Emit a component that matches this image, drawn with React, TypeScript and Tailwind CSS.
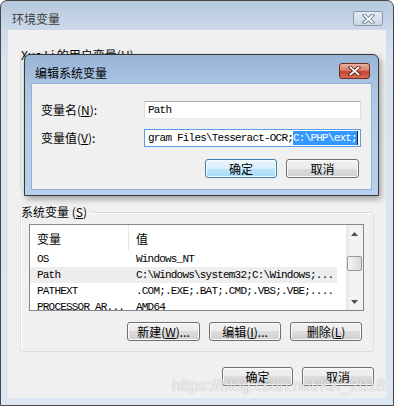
import type { ReactNode } from "react";

/* Win7-style "环境变量" dialog with the "编辑系统变量" child window on top */

const rows = [
  { name: "OS", value: "Windows_NT" },
  { name: "Path", value: "C:\\Windows\\system32;C:\\Windows;...", sel: true },
  { name: "PATHEXT", value: ".COM;.EXE;.BAT;.CMD;.VBS;.VBE;...." },
  { name: "PROCESSOR_AR...", value: "AMD64" },
];

function Btn({ children, className, def }: { children: ReactNode; className: string; def?: boolean }) {
  return (
    <div
      className={
        "h-[19px] rounded-[3px] border flex items-center justify-center text-[12px] leading-none text-black shadow-[inset_0_0_0_1px_#fbfbfb] " +
        (def
          ? "border-[#3c7fb1] bg-[linear-gradient(#eaf6fd_0%,#d9f0fc_50%,#bee6fd_50%,#a7d9f5_100%)] "
          : "border-[#707070] bg-[linear-gradient(#f2f2f2_0%,#ebebeb_50%,#dddddd_50%,#cfcfcf_100%)] ") +
        className
      }
    >
      {children}
    </div>
  );
}

function CloseX({ dark }: { dark: string }) {
  return (
    <svg width="13" height="10" viewBox="0 0 13 10">
      <path d="M2.5 1.5 L10.5 8.5 M10.5 1.5 L2.5 8.5" stroke={dark} strokeWidth="3.6" strokeLinecap="square" />
      <path d="M2.5 1.5 L10.5 8.5 M10.5 1.5 L2.5 8.5" stroke="#ffffff" strokeWidth="1.8" strokeLinecap="square" />
    </svg>
  );
}

function Tri({ up }: { up?: boolean }) {
  return (
    <svg width="7" height="4" viewBox="0 0 7 4">
      <path d={up ? "M0 4 L3.5 0 L7 4 Z" : "M0 0 L7 0 L3.5 4 Z"} fill="#4d4d4d" />
    </svg>
  );
}

export default function App() {
  return (
    <div className="w-[394px] h-[406px] relative overflow-hidden bg-white font-['Noto_Sans_CJK_SC','Liberation_Sans',sans-serif] text-black">
      {/* outer window */}
      <div className="w-full h-full flex flex-col border border-[#474747] rounded-t-[7px] px-[7px] pb-[7px] bg-[linear-gradient(180deg,#b6c8dd_0px,#cbd9ea_28px,#d8e3f0_60px,#dbe6f2_100%)]">
        <div className="h-[29px] flex items-start justify-between pl-[4px] pr-[3px]">
          <span className="pt-[11px] text-[12px] leading-[14px] text-[#3c3c3c]">环境变量</span>
          <div className="mt-[10px] w-[30px] h-[15px] rounded-[3px] border border-[#8797ad] bg-[linear-gradient(#e3ebf4,#cad7e7)] flex items-center justify-center">
            <CloseX dark="#6c7c92" />
          </div>
        </div>

        <div className="flex-1 bg-[#f0f0f0] px-[12px] flex flex-col">
          <fieldset className="mt-[18px] h-[142px] border border-[#d5dfe5] rounded-[3px]">
            <legend className="text-[12px] leading-[14px] pr-[3px]">Xue Li 的用户变量(<u>U</u>)</legend>
          </fieldset>

          <fieldset className="mt-[15px] border border-[#d5dfe5] rounded-[3px] shadow-[inset_1px_1px_0_#ffffff]">
            <legend className="text-[12px] leading-[14px] pr-[3px]">
              系统变量 (<u>S</u>)
            </legend>
            <div className="pt-[5px] pl-[8px] pr-[9px] pb-[10px]">
              <div className="h-[87px] border border-[#828790] bg-white flex overflow-hidden">
                <div className="flex-1 flex flex-col">
                  <div className="h-[26px] flex text-[12px] leading-none shrink-0">
                    <div className="w-[99px] pl-[7px] pt-[2px] flex items-center border-r border-[#e5e5e5]">变量</div>
                    <div className="flex-1 pl-[7px] pt-[2px] flex items-center">值</div>
                  </div>
                  {rows.map((r) => (
                    <div
                      key={r.name}
                      className={
                        "h-[16px] shrink-0 flex items-center w-[307px] font-['Liberation_Mono',monospace] text-[11px] tracking-[-0.8px] leading-none " +
                        (r.sel ? "bg-[#eeeeee]" : "")
                      }
                    >
                      <div className="w-[99px] pl-[7px] whitespace-nowrap overflow-hidden">{r.name}</div>
                      <div className="flex-1 pl-[7px] whitespace-nowrap overflow-hidden">{r.value}</div>
                    </div>
                  ))}
                </div>
                <div className="w-[17px] flex flex-col bg-[linear-gradient(90deg,#e6e6e6,#f4f4f4_30%,#f0f0f0)]">
                  <div className="h-[17px] flex items-center justify-center">
                    <Tri up />
                  </div>
                  <div className="mt-[14px] ml-[1px] w-[15px] h-[15px] rounded-[2px] border border-[#979797] bg-[linear-gradient(90deg,#f5f5f5,#e6e6e6_50%,#d9d9d9)]" />
                  <div className="flex-1" />
                  <div className="h-[17px] flex items-center justify-center">
                    <Tri />
                  </div>
                </div>
              </div>
              <div className="mt-[11px] pr-[2px] flex justify-end gap-[9px]">
                <Btn className="w-[73px]">新建(<u>W</u>)...</Btn>
                <Btn className="w-[72px]">编辑(<u>I</u>)...</Btn>
                <Btn className="w-[72px]">删除(<u>L</u>)</Btn>
              </div>
            </div>
          </fieldset>

          <div className="mt-[15px] flex justify-end gap-[9px]">
            <Btn className="w-[71px]">确定</Btn>
            <Btn className="w-[72px]">取消</Btn>
          </div>
        </div>
      </div>

      {/* child dialog */}
      <div className="absolute left-[24px] top-[54px] w-[355px] h-[142px] border border-[#363636] rounded-t-[6px] px-[6px] pb-[5px] flex flex-col bg-[linear-gradient(180deg,#98b4d5_0px,#a8c3e1_26px,#b3cce8_60px,#b8d1ec_100%)] shadow-[2px_3px_6px_rgba(0,0,0,0.35)]">
        <div className="h-[28px] flex items-start justify-between pl-[4px] pr-[2px]">
          <span className="pt-[11px] text-[12px] leading-[14px]">编辑系统变量</span>
          <div className="mt-[8px] w-[31px] h-[16px] rounded-[3px] border border-[#6e2d26] bg-[linear-gradient(#eab0a2_0%,#dc7f6c_45%,#c5432f_55%,#d66c55_100%)] flex items-center justify-center">
            <CloseX dark="#58221c" />
          </div>
        </div>
        <div className="flex-1 bg-[#f0f0f0] border border-[#8fb2d6] pl-[9px] pt-[17px]">
          <div className="h-[18px] flex items-center">
            <span className="w-[103px] text-[12px] leading-none">变量名(<u>N</u>):</span>
            <div className="w-[217px] h-[18px] border border-[#abadb3] border-b-[#e3e9ef] border-x-[#dbdfe6] bg-white pl-[3px] flex items-center font-['Liberation_Mono',monospace] text-[11px] tracking-[-0.8px] leading-none">
              Path
            </div>
          </div>
          <div className="mt-[10px] h-[18px] flex items-center">
            <span className="w-[103px] text-[12px] leading-none">变量值(<u>V</u>):</span>
            <div className="w-[217px] h-[18px] border border-[#569de5] bg-white pl-[3px] flex items-center font-['Liberation_Mono',monospace] text-[11px] tracking-[-0.8px] leading-none whitespace-nowrap overflow-hidden">
              <span>gram Files\Tesseract-OCR;</span>
              <span className="bg-[#3399ff] text-white h-[14px] flex items-center">C:\PHP\ext;</span>
              <span className="w-[1px] h-[14px] bg-[#222]" />
            </div>
          </div>
          <div className="mt-[12px] pr-[12px] flex justify-end gap-[9px]">
            <Btn className="w-[72px]" def>
              确定
            </Btn>
            <Btn className="w-[73px]">取消</Btn>
          </div>
        </div>
      </div>

      {/* watermark */}
      <div className="absolute left-[172px] top-[378px] font-['Liberation_Sans',sans-serif] text-[16px] leading-[16px] text-[rgba(255,255,255,0.8)] [text-shadow:0_0_1px_rgba(0,0,0,0.35)] whitespace-nowrap">
        https://blog.csdn.net/KK_2018
      </div>
    </div>
  );
}
